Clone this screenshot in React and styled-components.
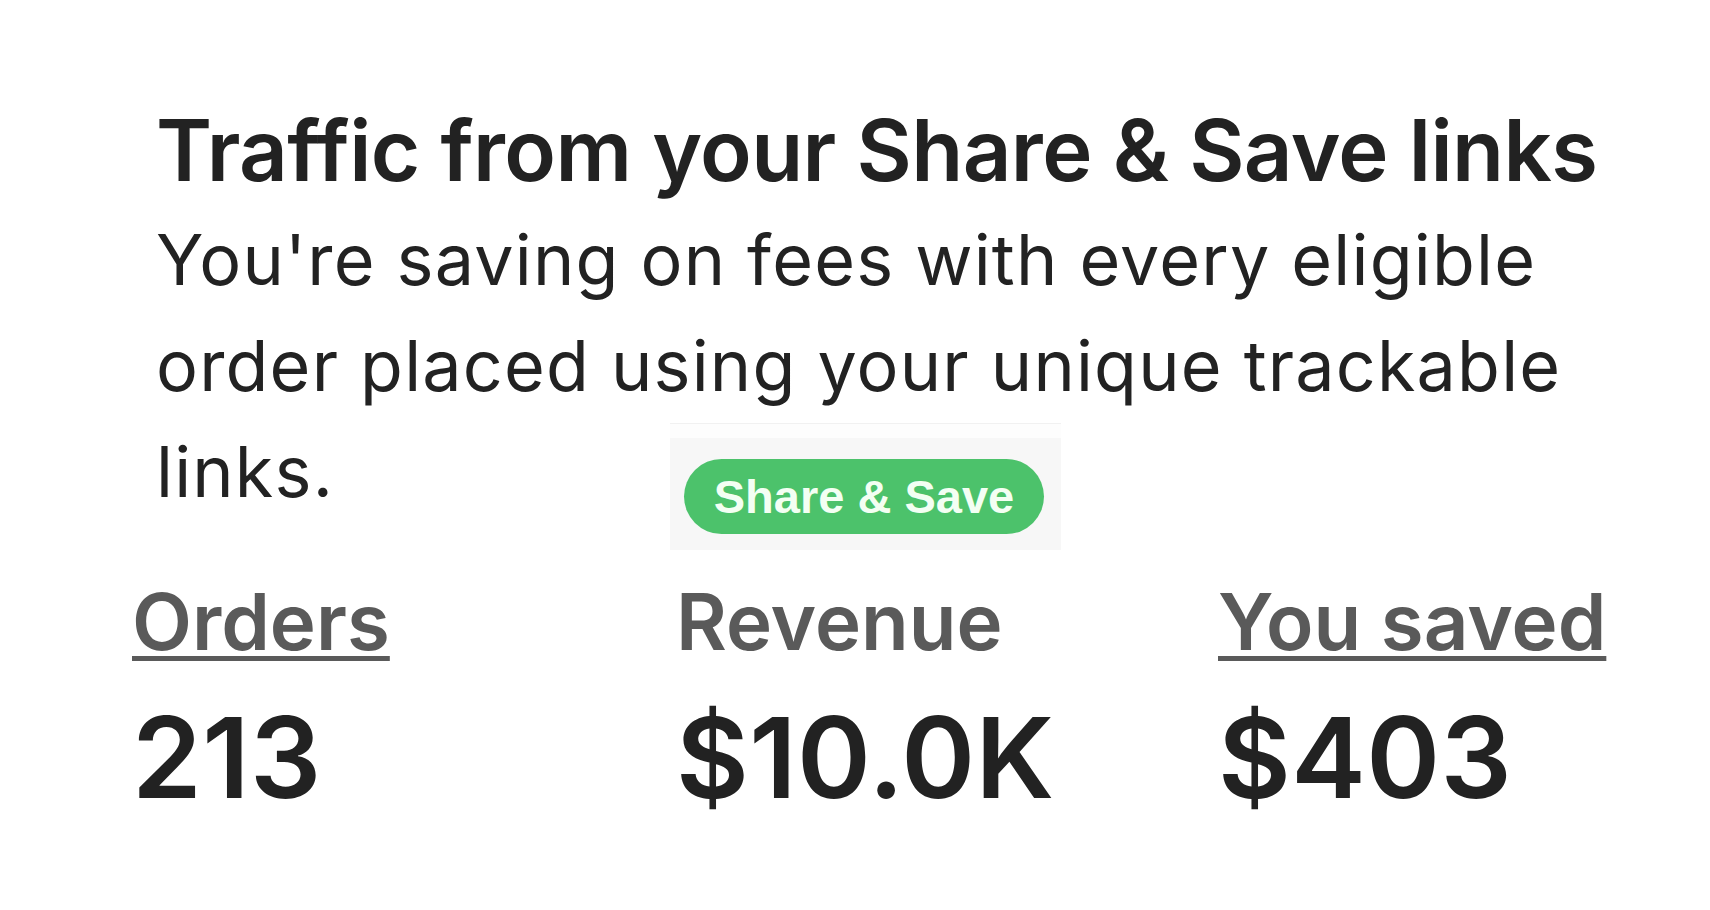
import React from "react";
import styled, { createGlobalStyle } from "styled-components";

const Global = createGlobalStyle`
  html, body { margin: 0; padding: 0; background: #ffffff; }
  body { font-family: Inter, Roboto, "Noto Sans", sans-serif; color: #222222; }
`;

const Page = styled.div`
  position: relative;
  width: 1710px;
  height: 910px;
  box-sizing: border-box;
  padding-top: 95px;
  overflow: hidden;
`;

const Intro = styled.section`
  padding-left: 156px;
`;

const Title = styled.h1`
  margin: 0;
  font-size: 85px;
  line-height: 112px;
  font-weight: 600;
  color: #222222;
  letter-spacing: -0.6px;
`;

const Body = styled.p`
  margin: 0;
  width: 1480px;
  font-size: 70px;
  line-height: 106px;
  font-weight: 400;
  color: #222222;
  letter-spacing: 1.2px;
`;

const Stats = styled.div`
  display: grid;
  grid-template-columns: 544px 542px auto;
  padding-left: 132px;
  margin-top: 50px;
`;

const Stat = styled.div`
  display: flex;
  flex-direction: column;
  gap: 31px;
`;

const Label = styled.span`
  font-size: 78px;
  line-height: 94px;
  font-weight: 600;
  color: #5a5a5a;
  text-decoration: ${(p) => (p.$link ? "underline" : "none")};
  text-decoration-thickness: 5px;
  text-underline-offset: 6px;
  align-self: flex-start;
`;

const Value = styled.span`
  font-size: 112px;
  line-height: 115px;
  font-weight: 600;
  color: #222222;
  letter-spacing: 0.4px;
`;

const Sticker = styled.div`
  position: absolute;
  left: 670px;
  top: 423px;
  width: 391px;
  height: 127px;
  box-sizing: border-box;
  background: linear-gradient(#fdfdfd 0 14px, #f7f7f7 14px);
  border-top: 1px solid #f1f1f1;
  display: flex;
  align-items: flex-start;
  padding: 35px 0 0 14px;
`;

const Pill = styled.div`
  width: 360px;
  height: 75px;
  border-radius: 38px;
  background: #4cc26b;
  display: flex;
  align-items: center;
  justify-content: center;
  font-family: "Liberation Sans", Arial, sans-serif;
  font-weight: 700;
  font-size: 47px;
  color: #f3fff3;
`;

const stats = [
  { label: "Orders", value: "213", link: true },
  { label: "Revenue", value: "$10.0K", link: false },
  { label: "You saved", value: "$403", link: true },
];

export default function App() {
  return (
    <>
      <Global />
      <Page>
        <Intro>
          <Title>Traffic from your Share &amp; Save links</Title>
          <Body>
            You're saving on fees with every eligible order placed using your
            unique trackable links.
          </Body>
        </Intro>
        <Stats>
          {stats.map((s) => (
            <Stat key={s.label}>
              <Label $link={s.link}>{s.label}</Label>
              <Value>{s.value}</Value>
            </Stat>
          ))}
        </Stats>
        <Sticker>
          <Pill>Share &amp; Save</Pill>
        </Sticker>
      </Page>
    </>
  );
}
